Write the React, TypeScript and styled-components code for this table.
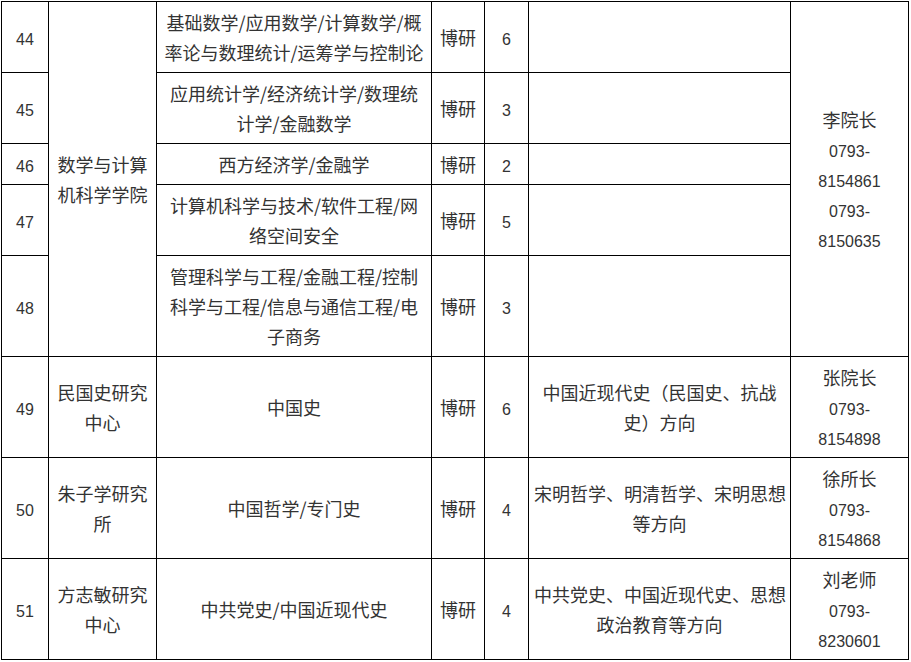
import React from "react";
import styled, { createGlobalStyle } from "styled-components";

const GlobalStyle = createGlobalStyle`
  html, body {
    margin: 0;
    padding: 0;
    background: #fff;
  }
`;

const Page = styled.div`
  padding: 1px 0 0 1px;
`;

const Table = styled.table`
  width: 908px;
  border-collapse: collapse;
  table-layout: fixed;
  color: #333;
  font-family: "Noto Sans CJK SC", "Noto Sans", sans-serif;
  font-size: 18px;
  line-height: 30px;
`;

const Cell = styled.td<{ $pad?: number }>`
  border: 1px solid #000;
  padding: 5px ${(p) => p.$pad ?? 5}px;
  text-align: center;
  vertical-align: middle;
  white-space: nowrap;
`;

const Num = styled.span`
  font-family: "Liberation Sans", Arial, sans-serif;
  font-size: 16px;
  line-height: 1;
`;

const Line = styled.div`
  height: 30px;
`;

type Row = {
  no: string;
  majors: string[];
  count: string;
  direction?: string[];
};

const widths = [47, 108, 275, 53, 44, 262, 118];

const mathRows: Row[] = [
  { no: "44", majors: ["基础数学/应用数学/计算数学/概", "率论与数理统计/运筹学与控制论"], count: "6" },
  { no: "45", majors: ["应用统计学/经济统计学/数理统", "计学/金融数学"], count: "3" },
  { no: "46", majors: ["西方经济学/金融学"], count: "2" },
  { no: "47", majors: ["计算机科学与技术/软件工程/网", "络空间安全"], count: "5" },
  {
    no: "48",
    majors: ["管理科学与工程/金融工程/控制", "科学与工程/信息与通信工程/电", "子商务"],
    count: "3",
  },
];

const otherRows: (Row & { college: string[]; contact: [string, string, string] })[] = [
  {
    no: "49",
    college: ["民国史研究", "中心"],
    majors: ["中国史"],
    count: "6",
    direction: ["中国近现代史（民国史、抗战", "史）方向"],
    contact: ["张院长", "0793-", "8154898"],
  },
  {
    no: "50",
    college: ["朱子学研究", "所"],
    majors: ["中国哲学/专门史"],
    count: "4",
    direction: ["宋明哲学、明清哲学、宋明思想", "等方向"],
    contact: ["徐所长", "0793-", "8154868"],
  },
  {
    no: "51",
    college: ["方志敏研究", "中心"],
    majors: ["中共党史/中国近现代史"],
    count: "4",
    direction: ["中共党史、中国近现代史、思想", "政治教育等方向"],
    contact: ["刘老师", "0793-", "8230601"],
  },
];

const Lines = ({ items }: { items: string[] }) => (
  <>
    {items.map((t, i) => (
      <Line key={i}>{t}</Line>
    ))}
  </>
);

const Contact = ({ name, phones }: { name: string; phones: string[] }) => (
  <>
    <Line>{name}</Line>
    {phones.map((p, i) => (
      <Line key={i}>
        <Num>{p}</Num>
      </Line>
    ))}
  </>
);

const App = () => (
  <Page>
    <GlobalStyle />
    <Table>
      <colgroup>
        {widths.map((w, i) => (
          <col key={i} style={{ width: w }} />
        ))}
      </colgroup>
      <tbody>
        {mathRows.map((r, i) => (
          <tr key={r.no}>
            <Cell>
              <Line>
                <Num>{r.no}</Num>
              </Line>
            </Cell>
            {i === 0 && (
              <Cell rowSpan={5}>
                <Lines items={["数学与计算", "机科学学院"]} />
              </Cell>
            )}
            <Cell $pad={7}>
              <Lines items={r.majors} />
            </Cell>
            <Cell>
              <Line>博研</Line>
            </Cell>
            <Cell>
              <Line>
                <Num>{r.count}</Num>
              </Line>
            </Cell>
            <Cell />
            {i === 0 && (
              <Cell rowSpan={5}>
                <Contact name="李院长" phones={["0793-", "8154861", "0793-", "8150635"]} />
              </Cell>
            )}
          </tr>
        ))}
        {otherRows.map((r) => (
          <tr key={r.no}>
            <Cell>
              <Line>
                <Num>{r.no}</Num>
              </Line>
            </Cell>
            <Cell>
              <Lines items={r.college} />
            </Cell>
            <Cell $pad={7}>
              <Lines items={r.majors} />
            </Cell>
            <Cell>
              <Line>博研</Line>
            </Cell>
            <Cell>
              <Line>
                <Num>{r.count}</Num>
              </Line>
            </Cell>
            <Cell>
              <Lines items={r.direction ?? []} />
            </Cell>
            <Cell>
              <Contact name={r.contact[0]} phones={[r.contact[1], r.contact[2]]} />
            </Cell>
          </tr>
        ))}
      </tbody>
    </Table>
  </Page>
);

export default App;
